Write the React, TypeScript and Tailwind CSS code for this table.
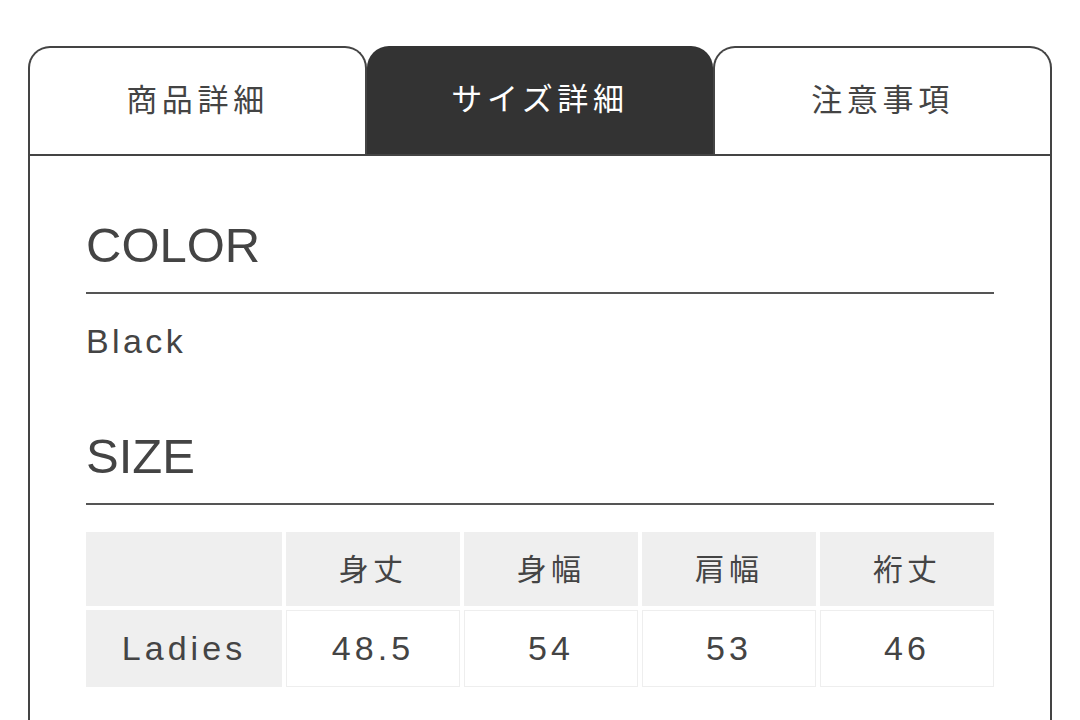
import React from 'react';

const FONT = { fontFamily: '"Liberation Sans", "Noto Sans CJK JP", sans-serif' };

const tabs = [
  { label: '商品詳細', active: false },
  { label: 'サイズ詳細', active: true },
  { label: '注意事項', active: false },
];

const heads = ['身丈', '身幅', '肩幅', '裄丈'];
const values = ['48.5', '54', '53', '46'];

export default function App() {
  return (
    <div className="w-[1080px] h-[720px] overflow-hidden bg-white text-[#444]" style={FONT}>
      <div className="pl-[28px] pt-[46px] w-[1052px]">
        {/* Tabs */}
        <div className="grid grid-cols-[339px_346px_1fr] h-[108px]">
          {tabs.map((t) =>
            t.active ? (
              <div
                key={t.label}
                className="flex items-center justify-center rounded-t-[22px] bg-[#333] text-white text-[31px] tracking-[0.15em]"
              >
                {t.label}
              </div>
            ) : (
              <div
                key={t.label}
                className="flex items-center justify-center rounded-t-[22px] border-2 border-b-0 border-[#444] bg-white text-[31px] tracking-[0.15em]"
              >
                {t.label}
              </div>
            )
          )}
        </div>

        {/* Content panel */}
        <div className="border-x-2 border-t-2 border-[#444] px-[56px] pt-[65px] pb-[80px]">
          <div className="text-[49px] leading-none">COLOR</div>
          <div className="mt-[22px] h-[2px] bg-[#555]" />
          <div className="mt-[30px] text-[34px] leading-none tracking-[0.1em]">Black</div>

          <div className="mt-[74px] text-[49px] leading-none">SIZE</div>
          <div className="mt-[22px] h-[2px] bg-[#555]" />

          <div className="mt-[27px] grid grid-cols-[196px_1fr_1fr_1fr_1fr] grid-rows-[74px_77px] gap-[4px]">
            <div className="bg-[#efefef]" />
            {heads.map((h) => (
              <div
                key={h}
                className="flex items-center justify-center bg-[#efefef] text-[30px] tracking-[0.14em]"
              >
                {h}
              </div>
            ))}
            <div className="flex items-center justify-center bg-[#efefef] text-[34px] tracking-[0.12em]">
              Ladies
            </div>
            {values.map((v) => (
              <div
                key={v}
                className="flex items-center justify-center border border-[#eee] bg-white text-[34px] tracking-[0.12em]"
              >
                {v}
              </div>
            ))}
          </div>
        </div>
      </div>
    </div>
  );
}
